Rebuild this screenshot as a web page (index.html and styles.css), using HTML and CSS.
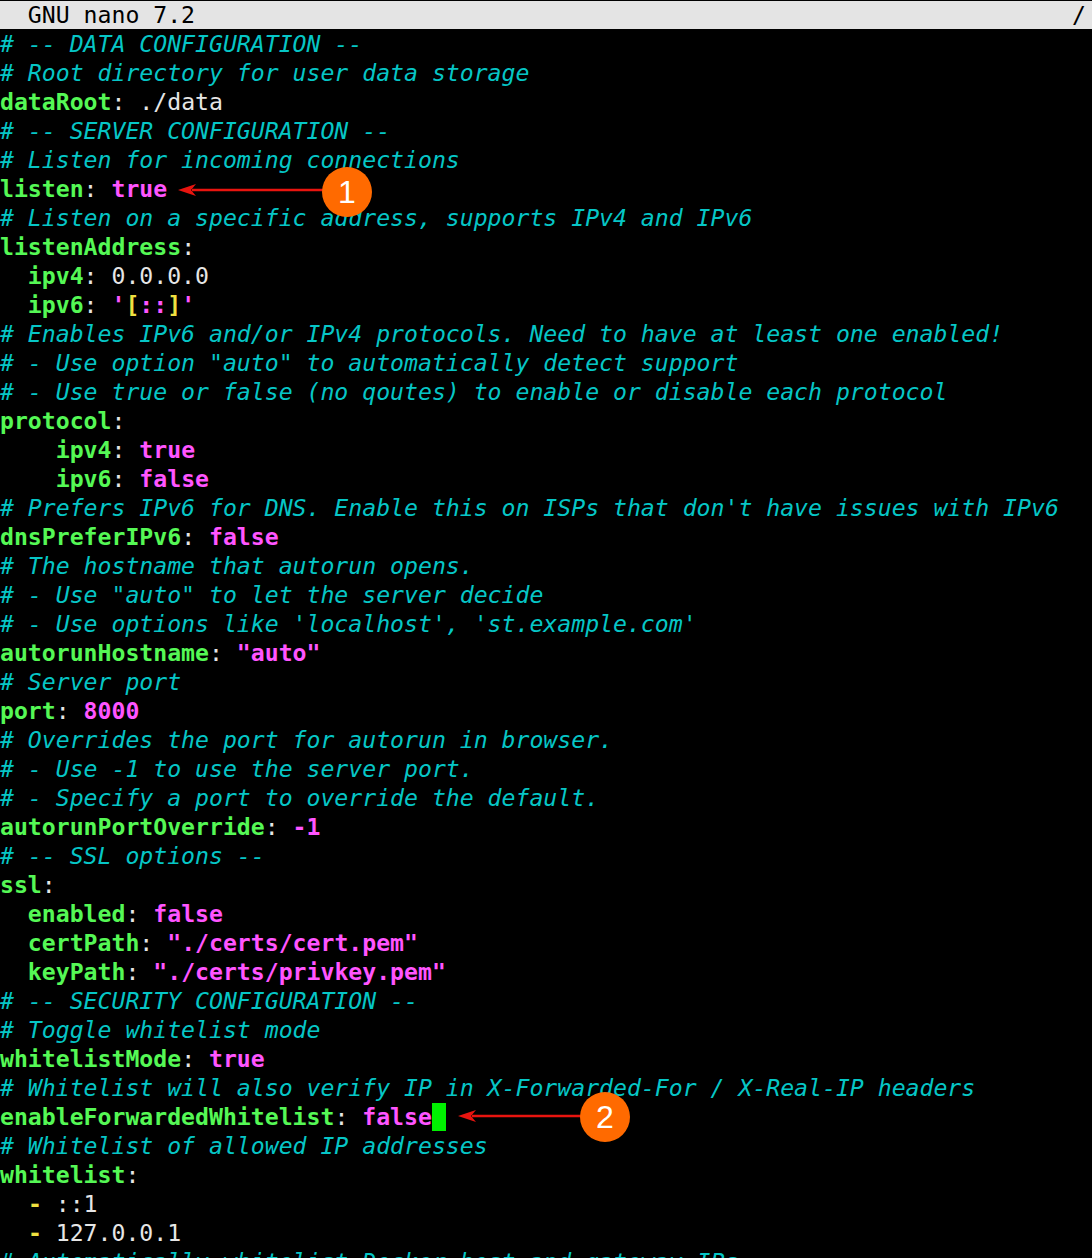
FILE: index.html
```html
<!DOCTYPE html>
<html>
<head>
<meta charset="utf-8">
<link rel="stylesheet" href="styles.css">
</head>
<body>
<div class="term">
<div class="title"><span>  GNU nano 7.2</span><span>/</span></div>
<div class="buf">
<div class="ln c"># -- DATA CONFIGURATION --</div>
<div class="ln c"># Root directory for user data storage</div>
<div class="ln"><span class="k">dataRoot</span><span class="p">: ./data</span></div>
<div class="ln c"># -- SERVER CONFIGURATION --</div>
<div class="ln c"># Listen for incoming connections</div>
<div class="ln"><span class="k">listen</span><span class="p">: </span><span class="v">true</span></div>
<div class="ln c"># Listen on a specific address, supports IPv4 and IPv6</div>
<div class="ln"><span class="k">listenAddress</span><span class="p">:</span></div>
<div class="ln"><span class="k">  ipv4</span><span class="p">: 0.0.0.0</span></div>
<div class="ln"><span class="k">  ipv6</span><span class="p">: </span><span class="v">'</span><span class="y">[</span><span class="v">::</span><span class="y">]</span><span class="v">'</span></div>
<div class="ln c"># Enables IPv6 and/or IPv4 protocols. Need to have at least one enabled!</div>
<div class="ln c"># - Use option "auto" to automatically detect support</div>
<div class="ln c"># - Use true or false (no qoutes) to enable or disable each protocol</div>
<div class="ln"><span class="k">protocol</span><span class="p">:</span></div>
<div class="ln"><span class="k">    ipv4</span><span class="p">: </span><span class="v">true</span></div>
<div class="ln"><span class="k">    ipv6</span><span class="p">: </span><span class="v">false</span></div>
<div class="ln c"># Prefers IPv6 for DNS. Enable this on ISPs that don't have issues with IPv6</div>
<div class="ln"><span class="k">dnsPreferIPv6</span><span class="p">: </span><span class="v">false</span></div>
<div class="ln c"># The hostname that autorun opens.</div>
<div class="ln c"># - Use "auto" to let the server decide</div>
<div class="ln c"># - Use options like 'localhost', 'st.example.com'</div>
<div class="ln"><span class="k">autorunHostname</span><span class="p">: </span><span class="v">"auto"</span></div>
<div class="ln c"># Server port</div>
<div class="ln"><span class="k">port</span><span class="p">: </span><span class="v">8000</span></div>
<div class="ln c"># Overrides the port for autorun in browser.</div>
<div class="ln c"># - Use -1 to use the server port.</div>
<div class="ln c"># - Specify a port to override the default.</div>
<div class="ln"><span class="k">autorunPortOverride</span><span class="p">: </span><span class="v">-1</span></div>
<div class="ln c"># -- SSL options --</div>
<div class="ln"><span class="k">ssl</span><span class="p">:</span></div>
<div class="ln"><span class="k">  enabled</span><span class="p">: </span><span class="v">false</span></div>
<div class="ln"><span class="k">  certPath</span><span class="p">: </span><span class="v">"./certs/cert.pem"</span></div>
<div class="ln"><span class="k">  keyPath</span><span class="p">: </span><span class="v">"./certs/privkey.pem"</span></div>
<div class="ln c"># -- SECURITY CONFIGURATION --</div>
<div class="ln c"># Toggle whitelist mode</div>
<div class="ln"><span class="k">whitelistMode</span><span class="p">: </span><span class="v">true</span></div>
<div class="ln c"># Whitelist will also verify IP in X-Forwarded-For / X-Real-IP headers</div>
<div class="ln"><span class="k">enableForwardedWhitelist</span><span class="p">: </span><span class="v">false</span><span class="cur"> </span></div>
<div class="ln c"># Whitelist of allowed IP addresses</div>
<div class="ln"><span class="k">whitelist</span><span class="p">:</span></div>
<div class="ln"><span class="p">  </span><span class="y">-</span><span class="p"> ::1</span></div>
<div class="ln"><span class="p">  </span><span class="y">-</span><span class="p"> 127.0.0.1</span></div>
<div class="ln c"># Automatically whitelist Docker host and gateway IPs</div>
</div>
<svg class="notes" width="1092" height="1258" viewBox="0 0 1092 1258">
  <g fill="#e8140f" stroke="#e8140f">
    <line x1="192" y1="190" x2="325" y2="190" stroke-width="2.5"/>
    <path d="M178 190 L196 184 L191 190 L196 196 Z" stroke="none"/>
    <line x1="472" y1="1116" x2="583" y2="1116" stroke-width="2.5"/>
    <path d="M458 1116 L476 1110 L471 1116 L476 1122 Z" stroke="none"/>
  </g>
  <circle cx="347" cy="192" r="25" fill="#ff6a00"/>
  <circle cx="605" cy="1117" r="25" fill="#ff6a00"/>
  <text x="347" y="203" class="num">1</text>
  <text x="605" y="1128" class="num">2</text>
</svg>
</div>
</body>
</html>
```

FILE: styles.css
```css
html, body {
  margin: 0;
  padding: 0;
  background: #000;
}
.term {
  position: relative;
  width: 1092px;
  height: 1258px;
  overflow: hidden;
  background: #000;
  font-family: "DejaVu Sans Mono", monospace;
  font-size: 23.15px;
}
.title {
  margin-top: 1px;
  height: 28px;
  line-height: 28px;
  background: #e4e4e4;
  color: #000;
  display: flex;
  justify-content: space-between;
  white-space: pre;
  padding-right: 6px;
}
.buf {
  display: flex;
  flex-direction: column;
  padding-top: 1px;
}
.ln {
  height: 29px;
  line-height: 29px;
  white-space: pre;
  color: #e6e6e6;
}
.c {
  color: #06c6c6;
  font-style: italic;
}
.k {
  color: #55f855;
  font-weight: bold;
}
.v {
  color: #ff55ff;
  font-weight: bold;
}
.p {
  color: #e6e6e6;
}
.y {
  color: #f0e040;
  font-weight: bold;
}
.cur {
  display: inline-block;
  width: 14px;
  height: 28px;
  vertical-align: top;
  background: #00f000;
}
.notes {
  position: absolute;
  left: 0;
  top: 0;
}
.num {
  fill: #fff;
  font-family: "Liberation Sans", Arial, sans-serif;
  font-size: 32px;
  text-anchor: middle;
}
```
